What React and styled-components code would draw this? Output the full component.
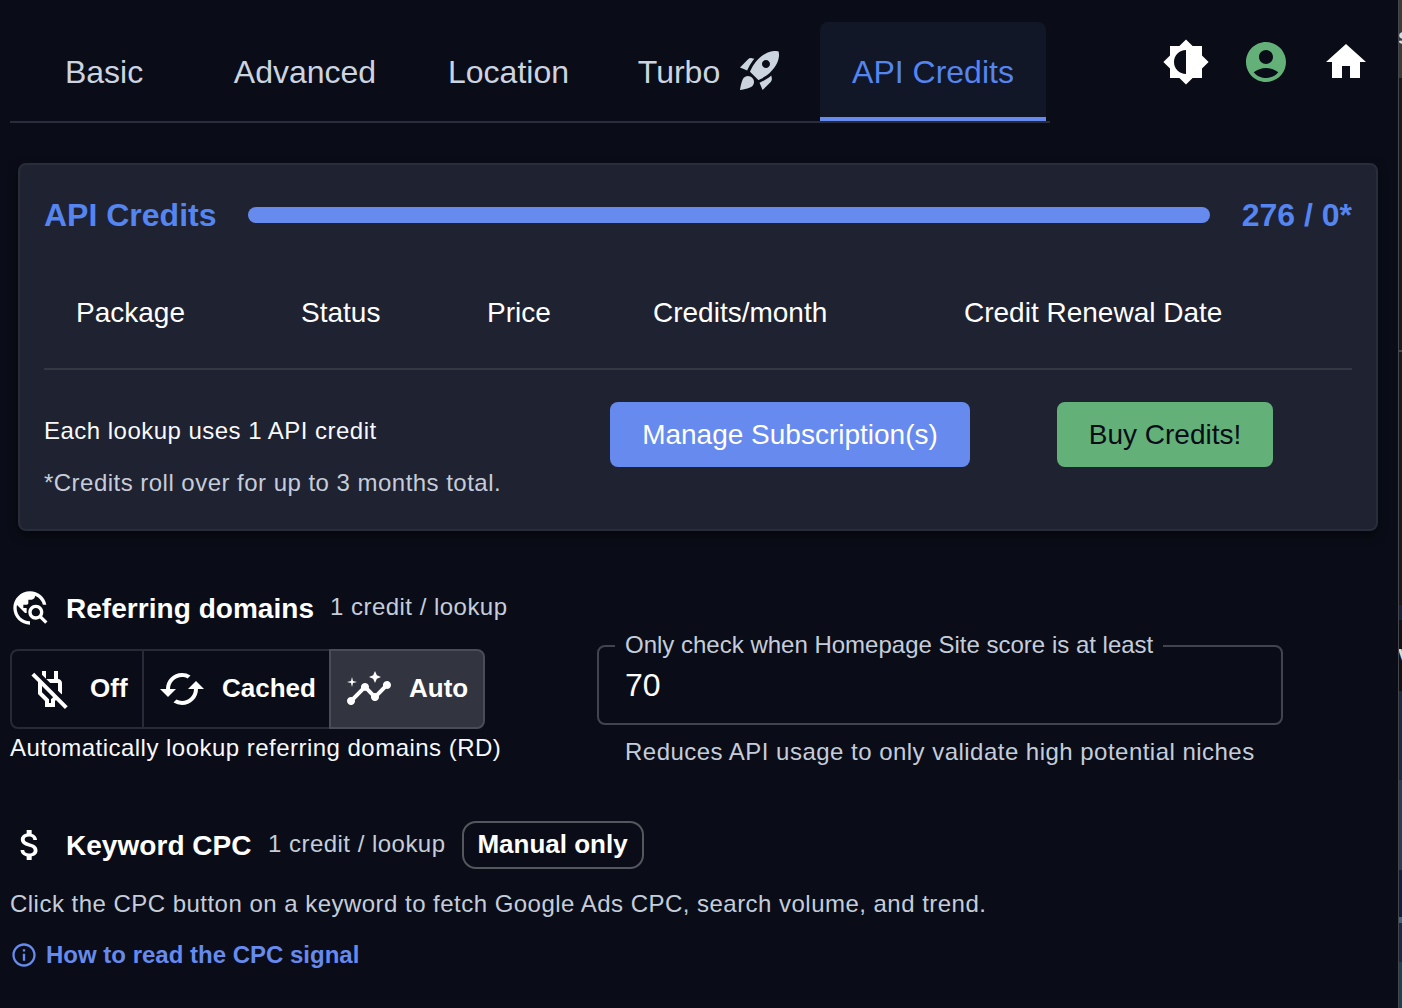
import React from "react";
import styled, { createGlobalStyle } from "styled-components";
import {
  MdRocketLaunch,
  MdTravelExplore,
  MdOutlinePowerOff,
  MdCached,
  MdInsights,
  MdAttachMoney,
  MdInfoOutline,
} from "react-icons/md";

const Global = createGlobalStyle`
  *, *::before, *::after { box-sizing: border-box; }
  body {
    margin: 0;
    background: #0a0d17;
    font-family: "Liberation Sans", Arial, Helvetica, sans-serif;
    color: #fff;
    overflow: hidden;
  }
  svg { display: block; flex: none; }
`;

const Window = styled.div`
  display: flex;
  width: 1402px;
  height: 1008px;
  overflow: hidden;
`;

const Main = styled.main`
  flex: none;
  width: 1398px;
  padding-left: 10px;
  display: flex;
  flex-direction: column;
  align-items: flex-start;
`;

const PageEdge = styled.aside`
  flex: none;
  width: 4px;
  border-left: 1px solid #46474a;
  display: flex;
  flex-direction: column;
`;

const EdgeBlock = styled.div`
  flex: none;
  height: ${(p) => p.$h}px;
  background: ${(p) => p.$bg};
  color: #dcdcdc;
  font-size: 22px;
  font-weight: 700;
  text-indent: -1px;
  line-height: ${(p) => p.$h - 4}px;
  overflow: hidden;
`;

const Header = styled.header`
  display: flex;
  align-items: flex-start;
  padding-top: 22px;
`;

const Tabs = styled.nav`
  display: flex;
  gap: 4px;
  width: 1040px;
  height: 101px;
  padding-left: 3px;
  border-bottom: 2px solid #292d3b;
`;

const Tab = styled.div`
  flex: none;
  width: ${(p) => p.$w}px;
  display: flex;
  align-items: center;
  justify-content: center;
  gap: 16px;
  padding-top: ${(p) => (p.$active ? 6 : 2)}px;
  font-size: 32px;
  white-space: nowrap;
  border-radius: 8px 8px 0 0;
  color: ${(p) => (p.$active ? "#5585f0" : "#ccd4e0")};
  background: ${(p) => (p.$active ? "#111727" : "transparent")};
  border-bottom: ${(p) => (p.$active ? "4px solid #668aee" : "0")};

  svg {
    margin-bottom: 6px;
  }
`;

const Actions = styled.div`
  display: flex;
  gap: 32px;
  padding: 16px 0 0 112px;
`;

const Card = styled.section`
  width: 1360px;
  height: 368px;
  margin: 40px 0 0 8px;
  padding: 0 24px;
  border: 2px solid #282c3b;
  border-radius: 8px;
  background: #1f2230;
  box-shadow: 0 4px 10px rgba(0, 0, 0, 0.5);
`;

const Usage = styled.div`
  display: flex;
  align-items: center;
  height: 100px;
  font-size: 32px;
  font-weight: 700;
  color: #5585f0;
  white-space: nowrap;
`;

const UsageTitle = styled.div`
  width: 204px;
`;

const Bar = styled.div`
  width: 962px;
  height: 16px;
  border-radius: 8px;
  background: #668aee;
  margin-right: 32px;
`;

const Columns = styled.div`
  display: grid;
  grid-template-columns: 225px 186px 166px 311px 1fr;
  align-items: center;
  height: 105px;
  padding: 0 0 7px 32px;
  border-bottom: 2px solid #343744;
  font-size: 28px;
  white-space: nowrap;
`;

const CardFoot = styled.div`
  display: flex;
  align-items: flex-start;
  padding-top: 32px;
`;

const Notes = styled.div`
  flex: none;
  width: 566px;
  display: flex;
  flex-direction: column;
  gap: 12px;
  padding-top: 9px;
`;

const Caption = styled.div`
  font-size: 24px;
  line-height: 40px;
  letter-spacing: 0.475px;
  white-space: nowrap;
  color: ${(p) => (p.$muted ? "#c5cddb" : "#f8f9fc")};
`;

const Button = styled.button`
  flex: none;
  width: ${(p) => p.$w}px;
  height: 65px;
  margin-right: 87px;
  padding: 0;
  border: 0;
  border-radius: 8px;
  font: 28px "Liberation Sans", Arial, sans-serif;
  white-space: nowrap;
  background: ${(p) => (p.$green ? "#63b179" : "#668aee")};
  color: ${(p) => (p.$green ? "#0a0d17" : "#fff")};
`;

const Settings = styled.section`
  display: flex;
  height: 225px;
  padding-top: 57px;
`;

const Lookup = styled.div`
  width: 587px;
`;

const Heading = styled.div`
  display: flex;
  align-items: center;
  height: ${(p) => p.$h || 40}px;
  white-space: nowrap;

  & > ${Caption} {
    padding-bottom: 2px;
  }
`;

const HeadingText = styled.h2`
  margin: 2px 0 0 16px;
  width: ${(p) => p.$w}px;
  font-size: 28px;
  font-weight: 700;
  letter-spacing: 0.04px;
`;

const Toggles = styled.div`
  display: flex;
  width: 475px;
  height: 80px;
  margin: 21px 0 -1px;
`;

const Toggle = styled.button`
  flex: none;
  width: ${(p) => p.$w}px;
  display: flex;
  align-items: center;
  gap: 16px;
  padding: 0 0 0 ${(p) => p.$pad || 14}px;
  border: 2px solid #282b37;
  border-left-width: ${(p) => (p.$joined ? 0 : 2)}px;
  border-right-width: ${(p) => (p.$joined ? 0 : 2)}px;
  border-radius: ${(p) => p.$radius};
  background: transparent;
  color: #fff;
  font: 700 26px "Liberation Sans", Arial, sans-serif;
  ${(p) =>
    p.$selected &&
    `
    background: #32343f;
    border-color: #4a4c58;
  `}

  span {
    padding-bottom: 2px;
  }
`;

const Field = styled.div`
  width: 686px;
  padding-top: 44px;
`;

const Fieldset = styled.fieldset`
  margin: 0;
  width: 686px;
  height: 93px;
  padding: 0 16px;
  border: 2px solid #43454e;
  border-radius: 8px;
`;

const Legend = styled.legend`
  width: 548px;
  height: 28px;
  padding: 0 10px;
  font-size: 24px;
  line-height: 26px;
  white-space: nowrap;
  color: #c5cddb;
`;

const Value = styled.input`
  display: block;
  width: 100%;
  height: 50px;
  padding: 0 10px;
  border: 0;
  background: none;
  outline: none;
  color: #fff;
  font: 32px "Liberation Sans", Arial, sans-serif;
`;

const Helper = styled(Caption)`
  padding: 7px 0 0 28px;
`;

const Keyword = styled.section`
  padding-top: 65px;
`;

const Description = styled(Caption)`
  margin-top: 15px;
`;

const Badge = styled.span`
  width: 182px;
  height: 48px;
  margin-left: 16px;
  padding-bottom: 2px;
  display: flex;
  align-items: center;
  justify-content: center;
  border: 2px solid #55575f;
  border-radius: 14px;
  font-size: 26px;
  font-weight: 700;
`;

const HelpLink = styled.a`
  display: flex;
  align-items: center;
  gap: 8px;
  height: 40px;
  margin-top: 11px;
  font-size: 24px;
  font-weight: 700;
  color: #668aee;
  white-space: nowrap;
`;

function ActionIcon({ d, color = "#fff", flip }) {
  return (
    <svg width="48" height="48" viewBox="0 0 24 24" fill={color}>
      <path d={d} transform={flip ? "matrix(-1 0 0 1 24 0)" : undefined} />
    </svg>
  );
}

const BRIGHTNESS =
  "M20 15.31L23.31 12 20 8.69V4h-4.69L12 .69 8.69 4H4v4.69L.69 12 4 15.31V20h4.69L12 23.31 15.31 20H20v-4.69zM12 18V6c3.31 0 6 2.69 6 6s-2.69 6-6 6z";
const ACCOUNT =
  "M12 2C6.48 2 2 6.48 2 12s4.48 10 10 10 10-4.48 10-10S17.52 2 12 2zm0 4c1.93 0 3.5 1.57 3.5 3.5S13.93 13 12 13s-3.5-1.57-3.5-3.5S10.07 6 12 6zm0 14c-2.03 0-4.43-.82-6.14-2.88C7.55 15.8 9.68 15 12 15s4.45.8 6.14 2.12C16.43 19.18 14.03 20 12 20z";
const HOME = "M10 20v-6h4v6h5v-8h3L12 3 2 12h3v8z";

export default function App() {
  return (
    <Window>
      <Global />
      <Main>
        <Header>
          <Tabs>
            <Tab $w={182}>Basic</Tab>
            <Tab $w={212}>Advanced</Tab>
            <Tab $w={187}>Location</Tab>
            <Tab $w={210}>
              Turbo
              <MdRocketLaunch size={48} />
            </Tab>
            <Tab $w={226} $active>
              API Credits
            </Tab>
          </Tabs>
          <Actions>
            <ActionIcon d={BRIGHTNESS} flip />
            <ActionIcon d={ACCOUNT} color="#63b179" />
            <ActionIcon d={HOME} />
          </Actions>
        </Header>

        <Card>
          <Usage>
            <UsageTitle>API Credits</UsageTitle>
            <Bar />
            <span>276 / 0*</span>
          </Usage>
          <Columns>
            <span>Package</span>
            <span>Status</span>
            <span>Price</span>
            <span>Credits/month</span>
            <span>Credit Renewal Date</span>
          </Columns>
          <CardFoot>
            <Notes>
              <Caption>Each lookup uses 1 API credit</Caption>
              <Caption $muted>*Credits roll over for up to 3 months total.</Caption>
            </Notes>
            <Button $w={360}>Manage Subscription(s)</Button>
            <Button $w={216} $green>
              Buy Credits!
            </Button>
          </CardFoot>
        </Card>

        <Settings>
          <Lookup>
            <Heading>
              <MdTravelExplore size={40} />
              <HeadingText $w={264}>Referring domains</HeadingText>
              <Caption $muted>1 credit / lookup</Caption>
            </Heading>
            <Toggles>
              <Toggle $w={134} $radius="8px 0 0 8px">
                <MdOutlinePowerOff size={48} />
                <span>Off</span>
              </Toggle>
              <Toggle $w={185} $radius="0" $joined>
                <MdCached size={48} />
                <span>Cached</span>
              </Toggle>
              <Toggle $w={156} $radius="0 8px 8px 0" $selected>
                <MdInsights size={48} />
                <span>Auto</span>
              </Toggle>
            </Toggles>
            <Caption>Automatically lookup referring domains (RD)</Caption>
          </Lookup>
          <Field>
            <Fieldset>
              <Legend>Only check when Homepage Site score is at least</Legend>
              <Value defaultValue="70" />
            </Fieldset>
            <Helper $muted>Reduces API usage to only validate high potential niches</Helper>
          </Field>
        </Settings>

        <Keyword>
          <Heading $h={48}>
            <MdAttachMoney size={40} />
            <HeadingText $w={202}>Keyword CPC</HeadingText>
            <Caption $muted>1 credit / lookup</Caption>
            <Badge>Manual only</Badge>
          </Heading>
          <Description $muted>
            Click the CPC button on a keyword to fetch Google Ads CPC, search volume, and trend.
          </Description>
          <HelpLink>
            <MdInfoOutline size={28} />
            How to read the CPC signal
          </HelpLink>
        </Keyword>
      </Main>
      <PageEdge>
        <EdgeBlock $h={78} $bg="#3b3b3b">s</EdgeBlock>
        <EdgeBlock $h={272} $bg="#181a1e" />
        <EdgeBlock $h={2} $bg="#46474a" />
        <EdgeBlock $h={253} $bg="#181a1e" />
        <EdgeBlock $h={15} $bg="#17223b" />
        <EdgeBlock $h={71} $bg="#101217">v</EdgeBlock>
        <EdgeBlock $h={89} $bg="#1c2942" />
        <EdgeBlock $h={90} $bg="#2c3b54" />
        <EdgeBlock $h={47} $bg="#101f3d" />
        <EdgeBlock $h={6} $bg="#466080" />
        <EdgeBlock $h={39} $bg="#1a2a46" />
        <EdgeBlock $h={46} $bg="#1b4352" />
      </PageEdge>
    </Window>
  );
}
